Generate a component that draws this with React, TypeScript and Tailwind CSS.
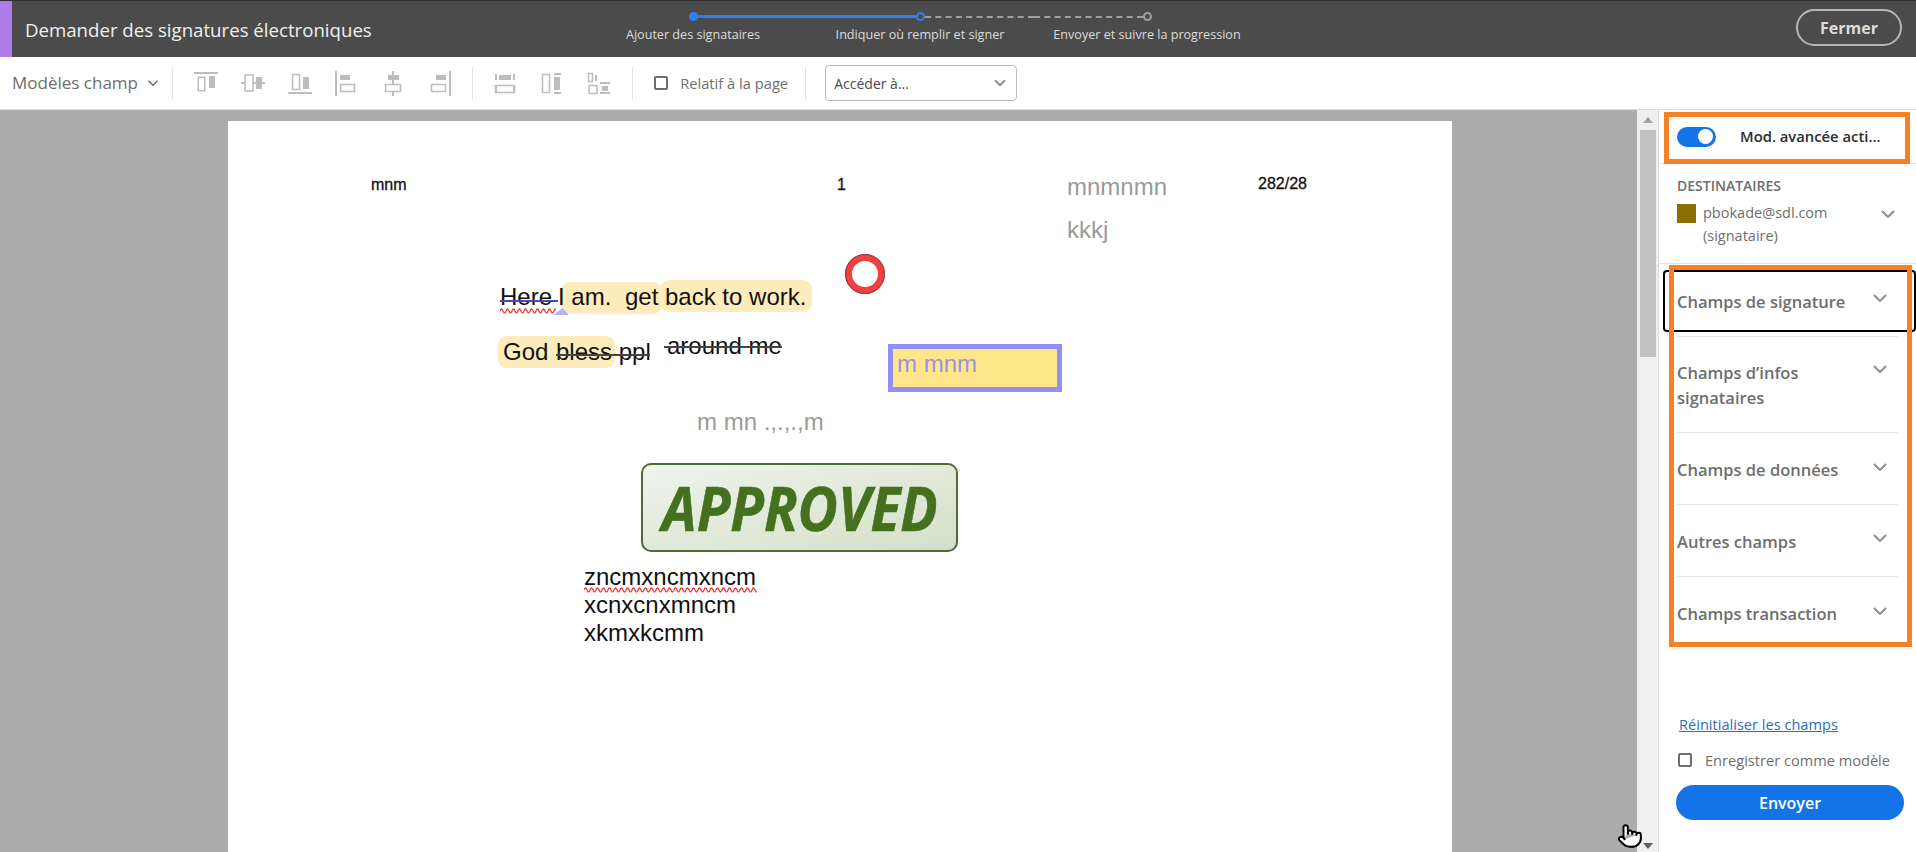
import { ChevronDown, Pointer } from 'lucide-react';

const Chevron = ({ className }: { className?: string }) => (
  <svg width="14" height="8" viewBox="0 0 14 8" fill="none" className={className}>
    <path d="M1 1l6 6 6-6" stroke="currentColor" strokeWidth="2" />
  </svg>
);

// alignment tools in the toolbar, greyed out
const toolIcons = [
  <>
    <path d="M0 1h24v2H0z" />
    <path d="M3.5 5.5h8v15h-8zM5 7v12h5V7z" fillRule="evenodd" />
    <path d="M15 5h6v12h-6z" />
  </>,
  <>
    <path d="M0 11h24v2H0z" />
    <path d="M4 4h8v16H4z" fill="#fff" stroke="#bdbdbd" strokeWidth="1.5" />
    <path d="M15 6h6v12h-6z" />
  </>,
  <>
    <path d="M0 21h24v2H0z" />
    <path d="M4.5 3.5h7v15h-7z" fill="none" stroke="#bdbdbd" strokeWidth="1.5" />
    <path d="M15 6h6v12h-6z" />
  </>,
  <>
    <path d="M1 0h2v25H1z" />
    <path d="M6 4h10v5H6z" />
    <path d="M6.5 13.5h14v7h-14z" fill="none" stroke="#bdbdbd" strokeWidth="1.5" />
  </>,
  <>
    <path d="M11 0h2v25h-2z" />
    <path d="M7 4h11v5H7z" />
    <path d="M4.5 13.5h15v7h-15z" fill="#fff" stroke="#bdbdbd" strokeWidth="1.5" />
  </>,
  <>
    <path d="M21 0h2v25h-2z" />
    <path d="M8 4h10v5H8z" />
    <path d="M3.5 13.5h14v7h-14z" fill="none" stroke="#bdbdbd" strokeWidth="1.5" />
  </>,
];

const spaceIcons = [
  <>
    <path d="M2 3h2v6H2zM20 3h2v6h-2zM2 15h2v7H2zM20 15h2v7h-2z" />
    <path d="M6 4h12v5H6z" />
    <path d="M2.5 14.5h19v7h-19z" fill="none" stroke="#bdbdbd" strokeWidth="1.5" />
  </>,
  <>
    <path d="M2.5 3.5h7v18h-7z" fill="none" stroke="#bdbdbd" strokeWidth="1.5" />
    <path d="M14 6h6v13h-6zM14 2h7v2h-7zM14 21h7v2h-7z" />
  </>,
  <>
    <path d="M1.5 2.5h4v8h-4z" fill="none" stroke="#bdbdbd" strokeWidth="1.5" />
    <path d="M8 4h2v6H8zM13 11h10v2H13zM13 21h10v2H13z" />
    <path d="M2 14.5h8v8H2z" fill="none" stroke="#bdbdbd" strokeWidth="1.5" />
    <path d="M15 15h6v5h-6z" />
  </>,
];

const Squiggle = ({ className, width }: { className: string; width: number }) => {
  let d = 'M0 3';
  for (let x = 0; x < width; x += 6) d += ` q1.5 -4 3 0 t3 0`;
  return (
    <svg width={width} height="6" viewBox={`0 0 ${width} 6`} fill="none" className={className}>
      <path d={d} stroke="#e8403c" strokeWidth="1.3" />
    </svg>
  );
};

const fieldGroups = [
  { label: ['Champs de signature'], cls: 'h-[73px] pt-[25px]', chev: 'mt-[5px]' },
  { label: ['Champs d’infos', 'signataires'], cls: 'h-[96px] pt-[23px]', chev: 'mt-[5px]' },
  { label: ['Champs de données'], cls: 'h-[72px] pt-[24px]', chev: 'mt-[6px]' },
  { label: ['Autres champs'], cls: 'h-[72px] pt-[24px]', chev: 'mt-[5px]' },
  { label: ['Champs transaction'], cls: 'h-[72px] pt-[24px]', chev: 'mt-[6px]' },
];

const App = () => {
  return (
    <div className="h-screen w-screen overflow-hidden flex flex-col bg-white font-['Open_Sans',sans-serif]">
      {/* Top bar */}
      <header className="h-[57px] shrink-0 flex bg-[#4b4b4b] border-t border-[#303030] text-white">
        <div className="w-3 bg-[#b07ee8]" />
        <div className="w-[567.5px] pl-[13px] pt-[14px] text-[18.65px] leading-[30px] text-[#f0f0f0]">
          Demander des signatures électroniques
        </div>
        <div className="w-[681px] grid grid-cols-3 text-[12.6px] text-[#dcdcdc]">
          <div className="pt-[11px]">
            <div className="flex items-center h-[9px]">
              <div className="flex-1" />
              <div className="w-[9px] h-[9px] rounded-full bg-[#2f80ed]" />
              <div className="flex-1 h-[2.5px] bg-[#2f80ed]" />
            </div>
            <div className="mt-[5px] text-center leading-[18px]">Ajouter des signataires</div>
          </div>
          <div className="pt-[11px]">
            <div className="flex items-center h-[9px]">
              <div className="flex-1 h-[2.5px] bg-[#2f80ed]" />
              <div className="w-[9px] h-[9px] rounded-full border-2 border-[#2f80ed]" />
              <div className="flex-1 border-t-2 border-dashed border-[#a0a0a0]" />
            </div>
            <div className="mt-[5px] text-center leading-[18px]">Indiquer où remplir et signer</div>
          </div>
          <div className="pt-[11px]">
            <div className="flex items-center h-[9px]">
              <div className="flex-1 border-t-2 border-dashed border-[#a0a0a0]" />
              <div className="w-[9px] h-[9px] rounded-full border-2 border-[#a0a0a0]" />
              <div className="flex-1" />
            </div>
            <div className="mt-[5px] text-center leading-[18px]">Envoyer et suivre la progression</div>
          </div>
        </div>
        <div className="flex-1 flex justify-end items-start pr-[14px] pt-[8px]">
          <button className="w-[106px] h-[37px] rounded-full border-2 border-[#b4b4b4] text-[16px] font-bold text-[#dcdcdc]">
            Fermer
          </button>
        </div>
      </header>

      {/* Toolbar */}
      <div className="h-[53px] shrink-0 flex items-center border-b border-[#dcdcdc] text-[#6e6e6e]">
        <div className="w-[173px] pl-3 flex items-center gap-2 border-r border-[#e4e4e4] h-[33px] text-[17px]">
          <span>Modèles champ</span>
          <Chevron className="text-[#6e6e6e] scale-75" />
        </div>
        <div className="h-[33px] flex items-center pl-[10px] pr-[9px] border-r border-[#e4e4e4] text-[#bdbdbd]">
          {toolIcons.map((icon, i) => (
            <div key={i} className="w-[46.7px] flex justify-center">
              <svg width="24" height="25" viewBox="0 0 24 25" fill="currentColor">{icon}</svg>
            </div>
          ))}
        </div>
        <div className="h-[33px] flex items-center pl-[9px] pr-[10px] border-r border-[#e4e4e4] text-[#bdbdbd]">
          {spaceIcons.map((icon, i) => (
            <div key={i} className="w-[46.7px] flex justify-center">
              <svg width="24" height="25" viewBox="0 0 24 25" fill="currentColor">{icon}</svg>
            </div>
          ))}
        </div>
        <div className="w-[173px] h-[33px] pl-[21px] flex items-center gap-[12px] border-r border-[#e4e4e4] text-[14.7px]">
          <span className="w-[14px] h-[14px] border-2 border-[#6e6e6e] rounded-[2px]" />
          <span>Relatif à la page</span>
        </div>
        <div className="ml-[19px] w-[192px] h-[36px] pl-2 pr-[7px] flex items-center justify-between border border-[#bbbbbb] rounded-[4px] text-[14px] text-[#4b4b4b]">
          <span>Accéder à...</span>
          <ChevronDown size={18} strokeWidth={2.5} className="text-[#8e8e8e]" />
        </div>
      </div>

      <div className="flex-1 min-h-0 flex">
        {/* Document */}
        <div className="w-[1637px] bg-[#ababab] pl-[228px] pt-[11px] overflow-hidden">
          <div className="relative w-[1224px] h-[800px] bg-white font-['Liberation_Sans',sans-serif] text-[24px] leading-[28px] text-[#111111]">
            <span className="absolute left-[143px] top-[54px] text-[16px] leading-[20px] [-webkit-text-stroke:0.3px_#111111]">mnm</span>
            <span className="absolute left-[609px] top-[54px] text-[16px] leading-[20px] [-webkit-text-stroke:0.3px_#111111]">1</span>
            <span className="absolute left-[839px] top-[52px] text-[#9a9a9a]">mnmnmn</span>
            <span className="absolute left-[839px] top-[95px] text-[#9a9a9a]">kkkj</span>
            <span className="absolute left-[1030px] top-[53px] text-[16px] leading-[20px] [-webkit-text-stroke:0.3px_#111111]">282/28</span>

            <div className="absolute left-[333px] top-[161px] w-[101px] h-[32px] rounded-[9px] bg-[#feecbd]" />
            <div className="absolute left-[432px] top-[159px] w-[152px] h-[32px] rounded-[9px] bg-[#feecbd]" />
            <div className="absolute left-[325px] top-[187px] w-[16px] h-[7px] bg-[#b8b4f2] [clip-path:polygon(0_100%,60%_0,100%_100%)]" />
            <span className="absolute left-[272px] top-[162px]">Here</span>
            <div className="absolute left-[272px] top-[179px] w-[58px] h-[2px] bg-[#4a48b8]" />
            <Squiggle className="absolute left-[272px] top-[187px]" width={56} />
            <span className="absolute left-[330px] top-[162px]">I am.</span>
            <span className="absolute left-[397px] top-[162px]">get</span>
            <span className="absolute left-[437px] top-[162px]">back to work.</span>

            <div className="absolute left-[270px] top-[215px] w-[117px] h-[32px] rounded-[9px] bg-[#feecbd]" />
            <span className="absolute left-[275px] top-[217px]">God</span>
            <span className="absolute left-[328px] top-[217px]">bless ppl</span>
            <div className="absolute left-[328px] top-[233px] w-[94px] h-[2px] bg-[#444444]" />
            <span className="absolute left-[439px] top-[211px]">around me</span>
            <div className="absolute left-[436px] top-[225px] w-[118px] h-[2px] bg-[#444444]" />

            <div className="absolute left-[617px] top-[133px] w-[40px] h-[40px] rounded-full bg-white border-[7px] border-[#f04040] outline outline-1 outline-[#7a4545] -outline-offset-1" />

            <div className="absolute left-[660px] top-[223px] w-[174px] h-[48px] bg-[#ffe68a] border-[5px] border-[#8f8ff5] pl-[4px] leading-[30px] text-[#9a94e0]">
              m mnm
            </div>
            <span className="absolute left-[469px] top-[287px] text-[#9a9a9a]">m mn .,.,.,m</span>

            <div className="absolute left-[413px] top-[342px] w-[317px] h-[89px] flex items-center justify-center rounded-[10px] border-2 border-[#4f6b3a] bg-gradient-to-br from-[#f0f4ec] to-[#d2e0c8]">
              <span className="font-['Open_Sans',sans-serif] italic font-bold text-[60px] leading-none text-[#45701f] scale-x-[0.92] [-webkit-text-stroke:0.6px_#45701f]">
                APPROVED
              </span>
            </div>

            <div className="absolute left-[356px] top-[442px]">
              <div>zncmxncmxncm</div>
              <div>xcnxcnxmncm</div>
              <div>xkmxkcmm</div>
            </div>
            <Squiggle className="absolute left-[356px] top-[466px]" width={173} />
          </div>
        </div>

        {/* Scrollbar */}
        <div className="w-[21px] bg-[#f0f0f0] flex flex-col items-center">
          <svg width="10" height="6" viewBox="0 0 10 6" className="mt-[7px] text-[#a0a0a0]" fill="currentColor">
            <path d="M5 0l5 6H0z" />
          </svg>
          <div className="mt-[7px] w-4 h-[227px] bg-[#c1c1c1]" />
          <div className="flex-1" />
          <svg width="10" height="6" viewBox="0 0 10 6" className="mb-[3px] text-[#606060]" fill="currentColor">
            <path d="M0 0h10L5 6z" />
          </svg>
        </div>

        {/* Right panel */}
        <aside className="relative flex-1 flex flex-col border-l border-[#dcdcdc] text-[#6e6e6e]">
          <div className="h-[54px] shrink-0 pl-[18px] flex items-center border-b border-[#e4e4e4]">
            <div className="w-[39px] h-[20px] rounded-full bg-[#1473e6] flex items-center justify-end pr-[3px]">
              <div className="w-[15px] h-[15px] rounded-full bg-white" />
            </div>
            <span className="ml-6 text-[14.8px] font-semibold text-[#2c2c2c]">Mod. avancée acti...</span>
          </div>

          <div className="h-[100px] shrink-0 pl-[18px] pr-[21px] pt-[12px] border-b border-[#e4e4e4]">
            <div className="text-[14px] leading-[20px] font-semibold">DESTINATAIRES</div>
            <div className="mt-[8px] flex items-start">
              <div className="w-[19px] h-[19px] bg-[#8a7000]" />
              <div className="ml-[7px] -mt-[3px] flex-1 text-[14.5px] leading-[23px]">
                pbokade@sdl.com
                <br />
                (signataire)
              </div>
              <Chevron className="mt-[6px] text-[#8e8e8e]" />
            </div>
          </div>

          <div className="mx-[18px]">
            {fieldGroups.map((g, i) => (
              <div key={i} className={`${g.cls} ${i < 4 ? 'border-b border-[#e4e4e4]' : ''} flex justify-between pr-[11px] text-[16.5px] leading-[25px] font-semibold`}>
                <div>
                  {g.label.map(l => (
                    <div key={l}>{l}</div>
                  ))}
                </div>
                <Chevron className={`${g.chev} text-[#8e8e8e]`} />
              </div>
            ))}
          </div>

          <div className="flex-1" />

          <div className="pl-[17px] pr-[12px] pb-[32px]">
            <a className="block pl-[3px] text-[14.6px] leading-[20px] text-[#2b6cc0] underline">Réinitialiser les champs</a>
            <label className="mt-4 pl-[2px] flex items-center gap-[13px] text-[14.6px] leading-[20px]">
              <span className="w-[14px] h-[14px] border-2 border-[#6e6e6e] rounded-[2px]" />
              Enregistrer comme modèle
            </label>
            <button className="mt-[15px] w-full h-[35px] rounded-full bg-[#1473e6] text-white text-[16px] font-semibold">
              Envoyer
            </button>
          </div>

          {/* Annotation frames over the panel */}
          <div className="absolute left-[5px] top-[2px] w-[246px] h-[52px] border-[5px] border-[#f58025]" />
          <div className="absolute left-[4px] top-[160px] w-[253px] h-[62px] rounded-[4px] border-2 border-black" />
          <div className="absolute left-[10px] top-[155px] w-[243px] h-[382px] border-[5px] border-[#f58025]" />
        </aside>
      </div>

      {/* Mouse pointer caught in the capture */}
      <Pointer size={26} strokeWidth={1.8} className="absolute left-[1617px] top-[823px] fill-white text-black" />
    </div>
  );
};

export default App;
